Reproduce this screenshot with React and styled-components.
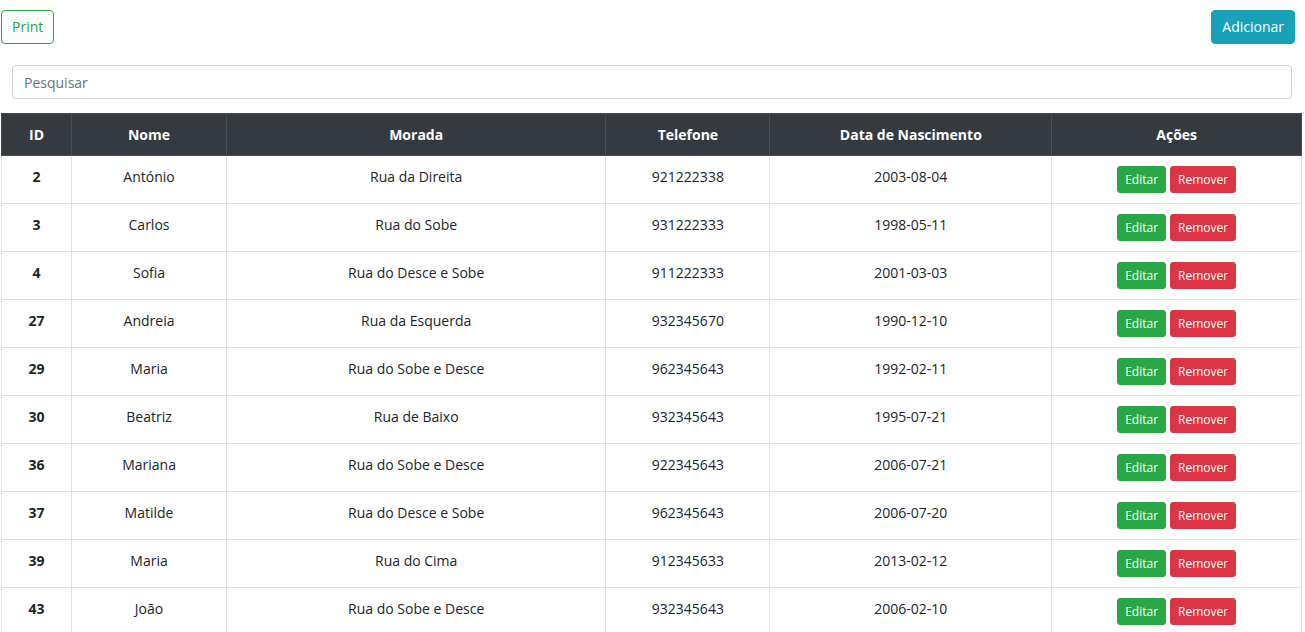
import React, { useState } from "react";
import styled, { createGlobalStyle } from "styled-components";

const GlobalStyle = createGlobalStyle`
  *, *::before, *::after { box-sizing: border-box; }
  html { scrollbar-width: none; }
  body {
    margin: 0;
    background: #fff;
    color: #212529;
    font-family: "Segoe UI", "Open Sans", "Noto Sans", sans-serif;
    font-size: 14px;
    line-height: 22px;
  }
`;

const Page = styled.main`
  display: flex;
  flex-direction: column;
  padding: 10px 3px 0 1px;
`;

const Toolbar = styled.div`
  display: flex;
  justify-content: space-between;
  padding-right: 7px;
`;

const variants = {
  outline: { color: "#28a745", background: "#fafdfb", border: "#28a745" },
  info: { color: "#fff", background: "#17a2b8", border: "#17a2b8" },
  success: { color: "#fff", background: "#28a745", border: "#28a745" },
  danger: { color: "#fff", background: "#dc3545", border: "#dc3545" },
};

const Button = styled.button`
  padding: 5px 10px;
  border: 1px solid ${({ $variant }) => variants[$variant].border};
  border-radius: 4px;
  background: ${({ $variant }) => variants[$variant].background};
  color: ${({ $variant }) => variants[$variant].color};
  font: inherit;
  cursor: pointer;
`;

const RowButton = styled(Button)`
  padding: 3px 7px 2px;
  border-radius: 3px;
  font-size: 12px;
  line-height: 20px;
`;

const SearchForm = styled.form`
  display: flex;
  padding: 21px 10px 14px 11px;
`;

const SearchInput = styled.input`
  flex: 1;
  min-width: 0;
  padding: 6px 11px 4px;
  border: 1px solid #ced4da;
  border-radius: 4px;
  background: #fff;
  color: #495057;
  font: inherit;

  &::placeholder { color: #6c757d; opacity: 1; }
`;

const Table = styled.table`
  width: 100%;
  table-layout: fixed;
  border-collapse: collapse;
  text-align: center;
`;

const Column = styled.col`
  width: ${({ $share }) => $share}%;
`;

const HeadCell = styled.th`
  padding: 10px 10px 9px;
  border: 1px solid #454d55;
  background: #343a40;
  color: #fff;
  font-weight: 700;
`;

const Cell = styled.td`
  padding: 10px;
  border: 1px solid #dee2e6;
  vertical-align: top;
`;

const IdCell = styled(Cell).attrs({ as: "th", scope: "row" })`
  font-weight: 700;
`;

const Actions = styled.div`
  display: flex;
  justify-content: center;
  gap: 4px;
`;

const columns = [
  { label: "ID", share: 5.4 },
  { label: "Nome", share: 11.9 },
  { label: "Morada", share: 29.2 },
  { label: "Telefone", share: 12.6 },
  { label: "Data de Nascimento", share: 21.7 },
  { label: "Ações", share: 19.2 },
];

const people = [
  [2, "António", "Rua da Direita", "921222338", "2003-08-04"],
  [3, "Carlos", "Rua do Sobe", "931222333", "1998-05-11"],
  [4, "Sofia", "Rua do Desce e Sobe", "911222333", "2001-03-03"],
  [27, "Andreia", "Rua da Esquerda", "932345670", "1990-12-10"],
  [29, "Maria", "Rua do Sobe e Desce", "962345643", "1992-02-11"],
  [30, "Beatriz", "Rua de Baixo", "932345643", "1995-07-21"],
  [36, "Mariana", "Rua do Sobe e Desce", "922345643", "2006-07-21"],
  [37, "Matilde", "Rua do Desce e Sobe", "962345643", "2006-07-20"],
  [39, "Maria", "Rua do Cima", "912345633", "2013-02-12"],
  [43, "João", "Rua do Sobe e Desce", "932345643", "2006-02-10"],
];

export default function App() {
  const [query, setQuery] = useState("");
  const visible = people.filter((person) =>
    person.join(" ").toLowerCase().includes(query.toLowerCase())
  );

  return (
    <>
      <GlobalStyle />
      <Page>
        <Toolbar>
          <Button type="button" $variant="outline" onClick={() => window.print()}>
            Print
          </Button>
          <Button type="button" $variant="info">Adicionar</Button>
        </Toolbar>
        <SearchForm role="search" onSubmit={(event) => event.preventDefault()}>
          <SearchInput
            type="text"
            aria-label="Pesquisar"
            placeholder="Pesquisar"
            value={query}
            onChange={(event) => setQuery(event.target.value)}
          />
        </SearchForm>
        <Table>
          <colgroup>
            {columns.map(({ label, share }) => (
              <Column key={label} $share={share} />
            ))}
          </colgroup>
          <thead>
            <tr>
              {columns.map(({ label }) => (
                <HeadCell key={label} scope="col">{label}</HeadCell>
              ))}
            </tr>
          </thead>
          <tbody>
            {visible.map(([id, name, address, phone, birth]) => (
              <tr key={id}>
                <IdCell>{id}</IdCell>
                <Cell>{name}</Cell>
                <Cell>{address}</Cell>
                <Cell>{phone}</Cell>
                <Cell>{birth}</Cell>
                <Cell>
                  <Actions>
                    <RowButton type="button" $variant="success">Editar</RowButton>
                    <RowButton type="button" $variant="danger">Remover</RowButton>
                  </Actions>
                </Cell>
              </tr>
            ))}
          </tbody>
        </Table>
      </Page>
    </>
  );
}
